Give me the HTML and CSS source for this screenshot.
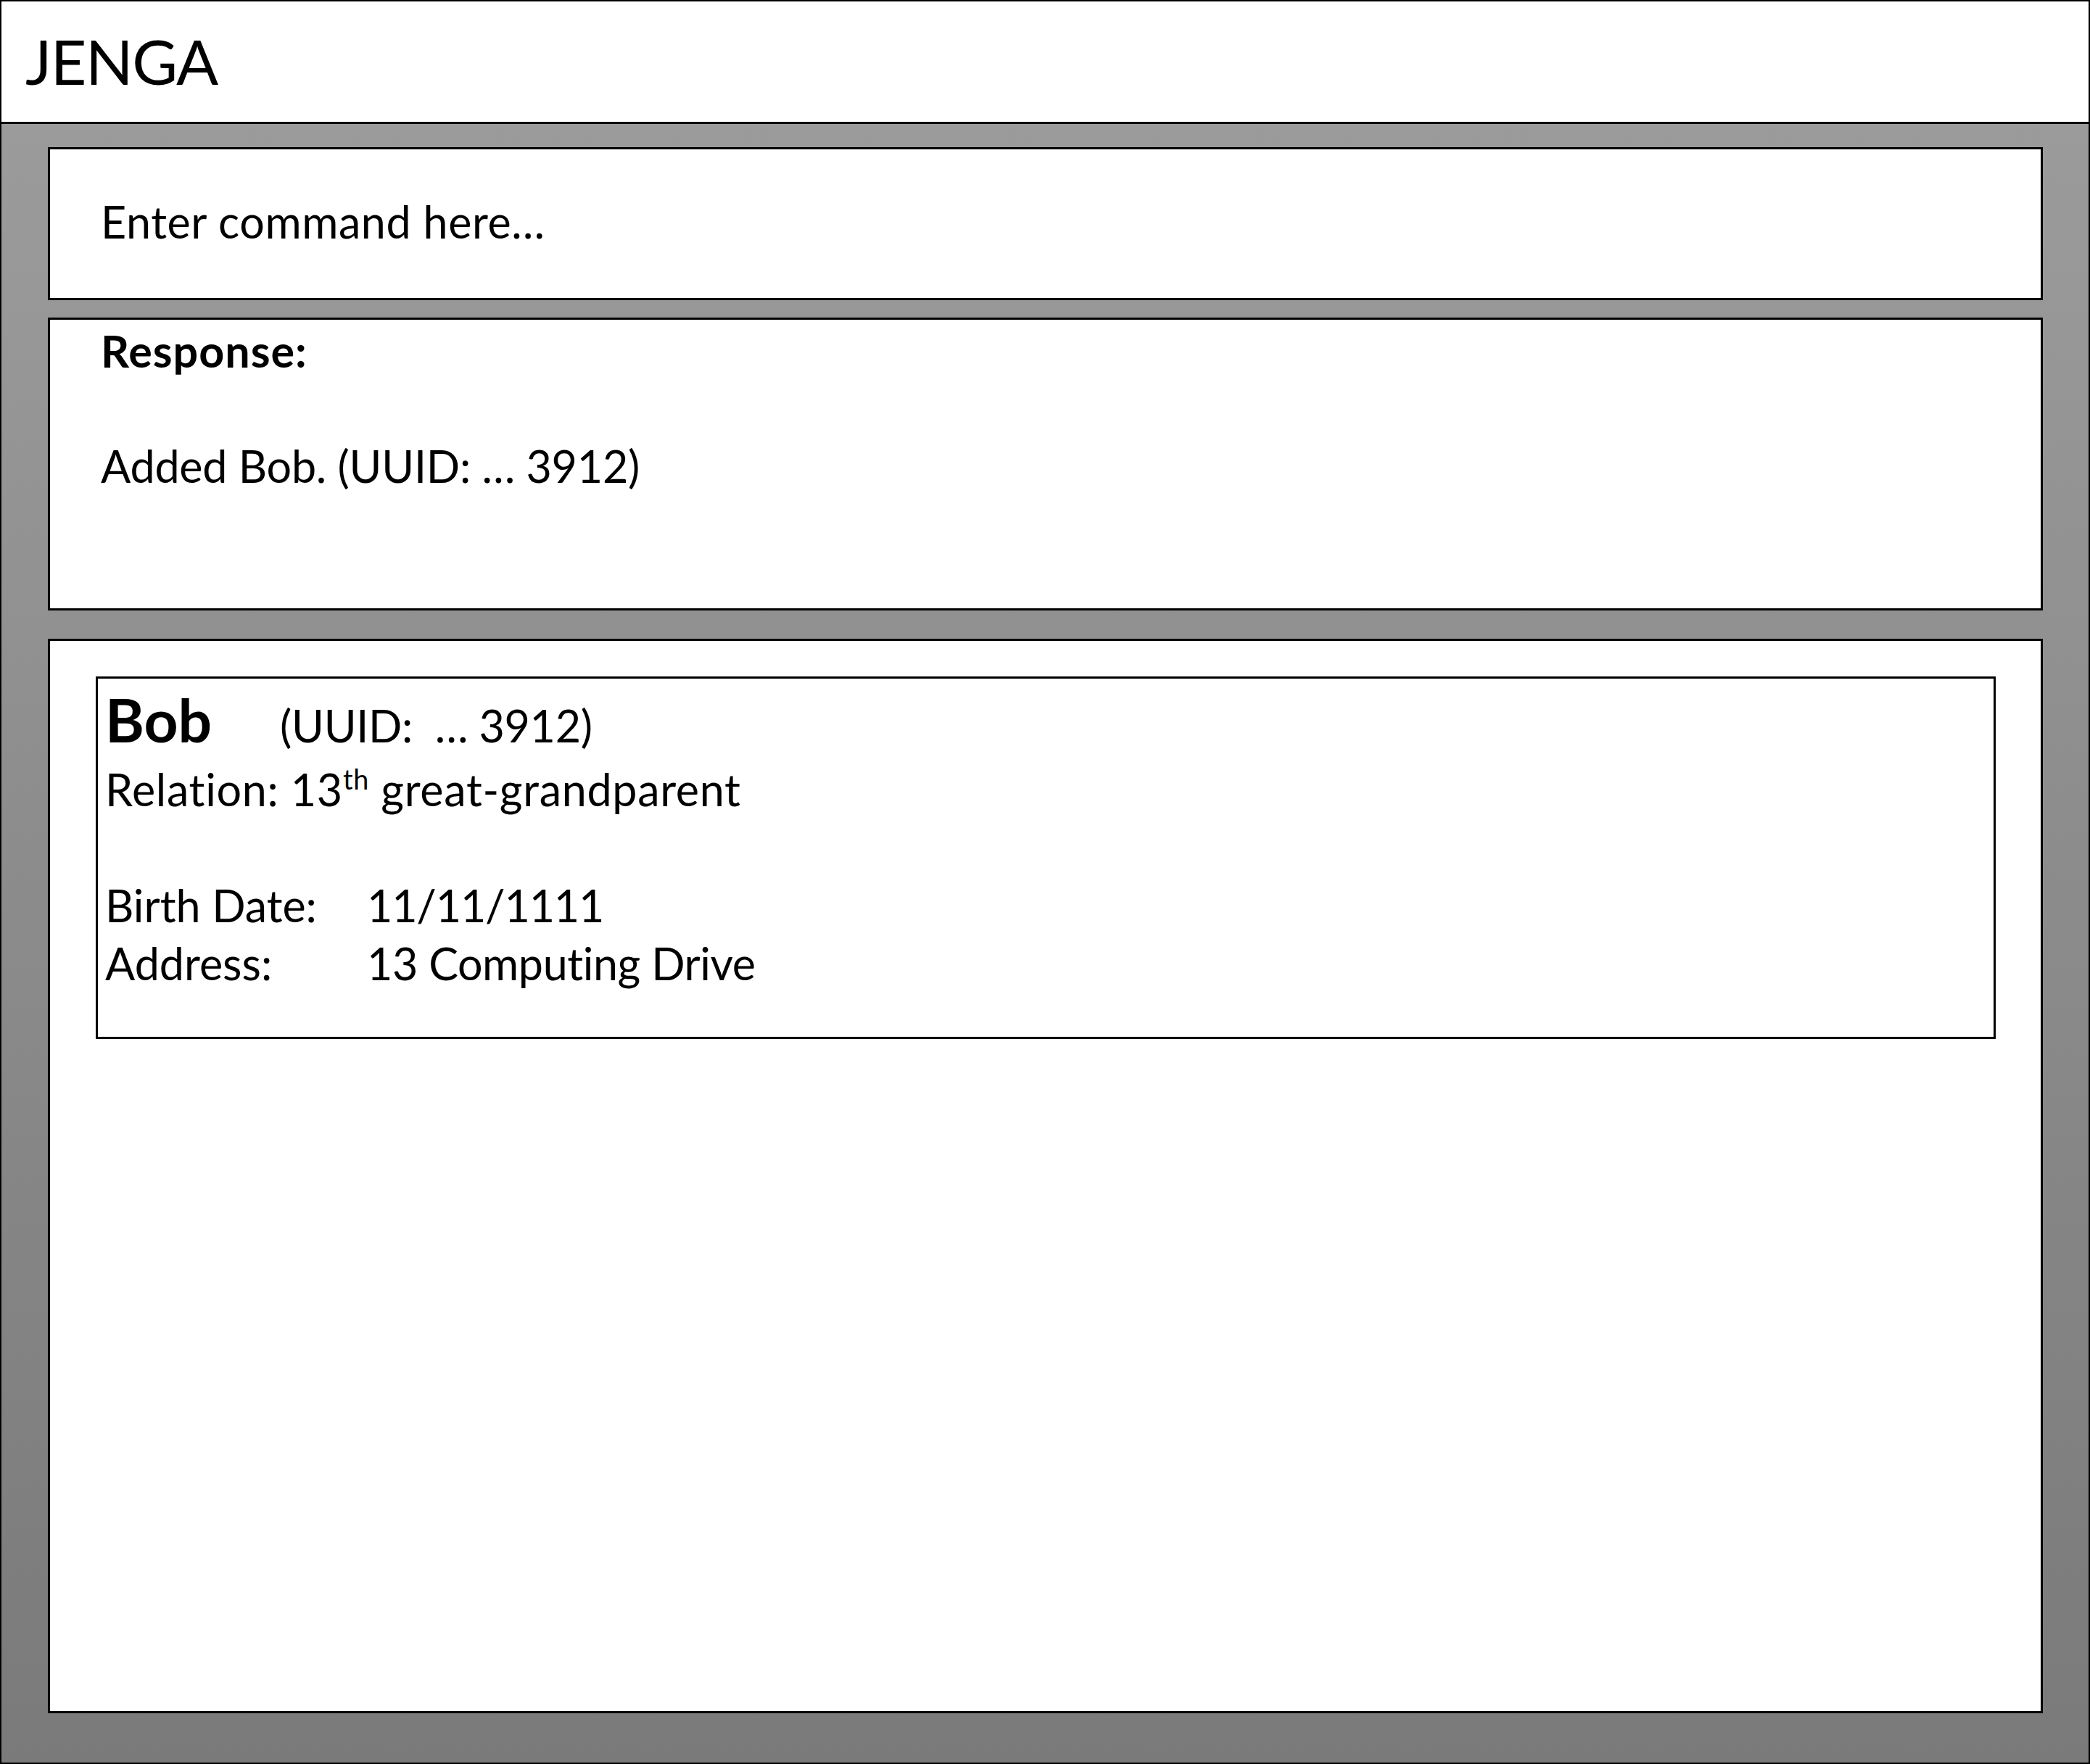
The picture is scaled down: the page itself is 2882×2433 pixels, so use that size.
FILE: index.html
```html
<!DOCTYPE html>
<html lang="en">
<head>
    <meta charset="UTF-8">
    <meta name="viewport" content="width=device-width, initial-scale=1.0">
    <title>JENGA</title>
    <link rel="stylesheet" href="styles.css">
</head>
<body>
    <div class="window">
        <header class="title-bar">
            <h1>JENGA</h1>
        </header>

        <main class="content">
            <div class="panel command-box">Enter command here…</div>

            <div class="panel response-box">
                <p class="response-label">Response:</p>
                <p class="response-text">Added Bob. (UUID: … 3912)</p>
            </div>

            <div class="panel person-list">
                <div class="person-card">
                    <div class="card-head">
                        <span class="person-name">Bob</span><span class="person-uuid">(UUID:&nbsp; … 3912)</span>
                    </div>
                    <div class="card-relation">Relation: 13<sup>th</sup> great-grandparent</div>
                    <dl class="card-details">
                        <dt>Birth Date:</dt>
                        <dd class="date">11/11/1111</dd>
                        <dt>Address:</dt>
                        <dd>13 Computing Drive</dd>
                    </dl>
                </div>
            </div>
        </main>
    </div>
</body>
</html>
```

FILE: styles.css
```css
html, body {
    margin: 0;
    height: 100%;
}
body {
    font-family: Lato, "Open Sans", sans-serif;
    font-size: 61px;
    line-height: 80px;
    font-variant-ligatures: none;
    color: #000;
    background: #fff;
}
.window {
    display: flex;
    flex-direction: column;
    height: 100vh;
    box-sizing: border-box;
    border: 2px solid #000;
}
.title-bar {
    height: 169px;
    box-sizing: border-box;
    padding: 22px 33px 0;
    border-bottom: 3px solid #000;
    background: #fff;
}
.title-bar h1 {
    margin: 0;
    font-size: 86px;
    font-weight: 400;
    line-height: 120px;
    letter-spacing: -1.5px;
}
.content {
    flex: 1;
    display: flex;
    flex-direction: column;
    padding: 32px 63px 68px 64px;
    background: linear-gradient(#9b9b9b, #7a7a7a);
}
.panel {
    box-sizing: border-box;
    border: 3px solid #000;
    background: #fff;
}
.command-box {
    height: 211px;
    padding: 60px 70px 0;
    letter-spacing: 0.6px;
}
.response-box {
    height: 404px;
    margin-top: 24px;
    padding: 3px 70px 0;
}
.response-box p {
    margin: 0;
}
.response-label {
    font-weight: 700;
    letter-spacing: 1px;
}
.response-text {
    margin-top: 79px !important;
    letter-spacing: -0.2px;
}
.person-list {
    flex: 1;
    margin-top: 39px;
    padding: 49px 62px 0 63px;
}
.person-card {
    border: 3px solid #000;
    padding: 8px 10px 61px;
}
.card-head {
    font-size: 82px;
    line-height: 96px;
}
.person-name {
    font-weight: 700;
}
.person-uuid {
    margin-left: 94px;
    font-size: 61px;
    letter-spacing: -0.3px;
}
.card-relation {
    letter-spacing: 0.7px;
}
.card-relation sup {
    font-size: 0.62em;
    line-height: 0;
    vertical-align: 0.6em;
}
.card-details {
    display: grid;
    grid-template-columns: 361px 1fr;
    margin: 80px 0 0;
}
.card-details dt,
.card-details dd {
    margin: 0;
}
.card-details dd {
    letter-spacing: -0.4px;
}
.card-details .date {
    letter-spacing: -1.2px;
}
```
